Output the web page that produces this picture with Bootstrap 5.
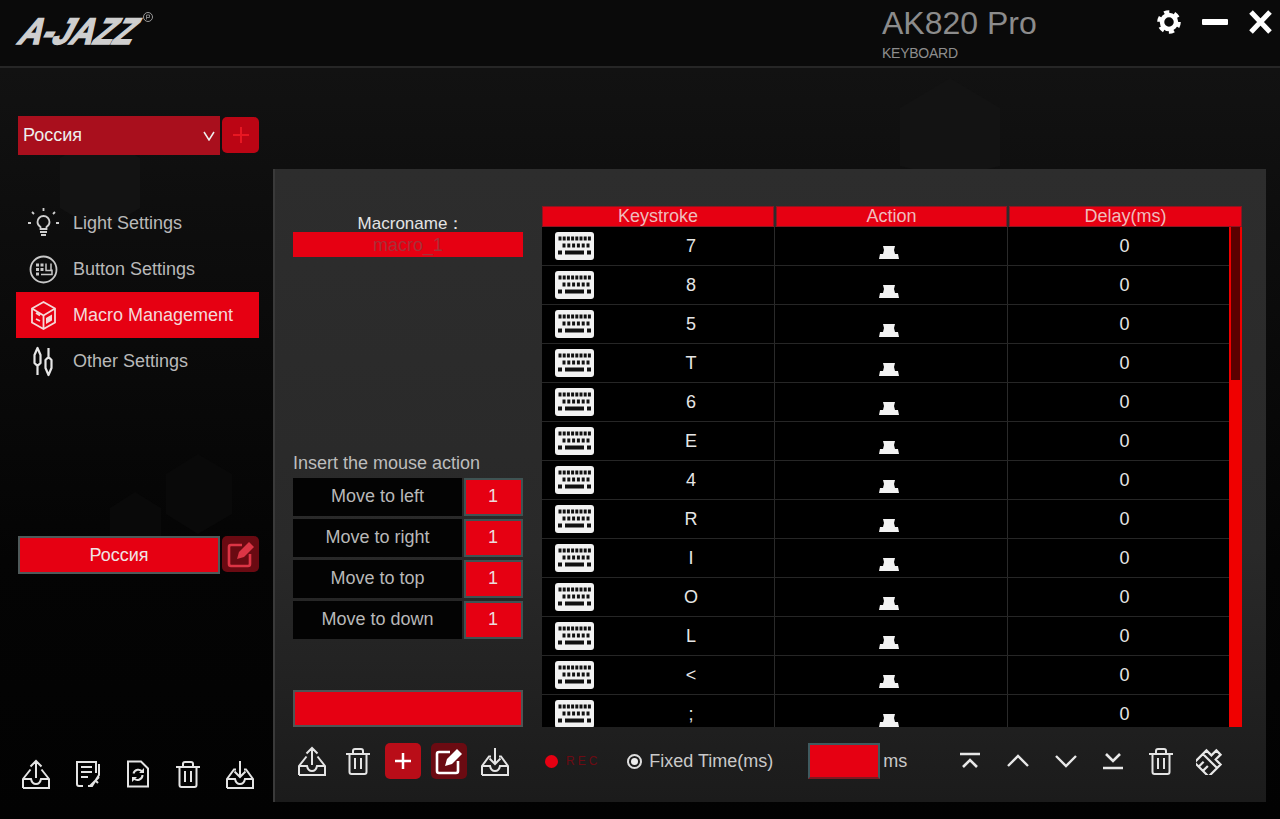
<!doctype html>
<html lang="en">
<head>
<meta charset="utf-8">
<title>AK820 Pro</title>
<link rel="stylesheet" href="https://cdn.jsdelivr.net/npm/bootstrap@5.3.0/dist/css/bootstrap.min.css">
<style>
html,body{height:100%;margin:0}
body{background:#050505;font-family:"Liberation Sans",Arial,sans-serif;color:#ddd;overflow:hidden}
.app-shell{width:1280px;height:819px;position:relative;background:linear-gradient(#121212 68px,#0e0e0e 200px,#040404 560px,#020202)}
.app-bg{position:absolute;left:0;top:68px;width:1280px;height:751px;pointer-events:none}
.app-head{height:68px;background:#0a0a0a;border-bottom:2px solid #262626;position:relative}
.logo-box{position:absolute;left:4px;top:2px}
.logo-text{font-family:"Liberation Sans",sans-serif;font-weight:700;font-size:37px;fill:#cfcfcf;stroke:#cfcfcf;stroke-width:1.600px}
.product{position:absolute;left:882px;top:4px;color:#8c8c8c;line-height:1}
.product-name{font-size:32px;margin-top:3px}
.product-sub{font-size:14px;margin-top:7px;color:#8e8e8e;letter-spacing:-.25px}
.win-icons{position:absolute;left:1156px;top:9px;gap:0}
.app-main{height:751px;position:relative}
.side-col{width:273px;padding:48px 14px 0 18px}
.sel-box{width:202px;height:39px;background:#a90f1d;color:#eee;font-size:18px;padding:0 5px}
.sq-btn{width:37px;height:36px;border-radius:5px;margin-left:2px;flex:none}
.sq-add{background:#bb0514;margin-bottom:2px}
.sq-edit{background:#6a0a12}
.side-nav{margin:45px 0 0 -2px;width:243px}
.side-item{height:46px;color:#b9b9b9;font-size:18px;padding-left:11px;gap:13px}
.side-item.is-on{background:#e60012;color:#f4d9d9}
.side-icon{width:33px;height:33px;flex:none}
.prof-btn{width:202px;height:38px;background:#e60012;border:2px solid #4f5a5a;color:#f0e4e4;font-size:18px}
.prof-row{margin-top:152px}
.side-tools{margin-top:185px;width:234px;margin-left:3px;justify-content:space-between}
.panel-box{width:993px;height:633px;margin-top:101px;background:linear-gradient(#2d2d2d,#292929 60%,#1b1b1b);border-left:2px solid #3a3a3a;padding:37px 0 0 18px;position:relative}
.left-col{width:230px;height:521px}
.macro-label{height:26px;line-height:35px;text-align:center;font-size:17px;color:#e4e4e4;padding-left:6px}
.macro-name{height:25px;background:#e60012;color:#a83038;text-align:center;font-size:18px;line-height:26px}
.insert-label{margin-top:194px;height:27px;line-height:25px;font-size:18px;color:#bdbdbd}
.move-row{height:38px;margin-bottom:3px;gap:2px}
.move-name{width:169px;background:#030303;color:#b8b8b8;font-size:18px;padding-bottom:1px}
.move-val{width:59px;height:38px;background:#e60012;border:2px solid #3f5353;color:#ecdcdc;font-size:18px;padding:0 1px 1px 0}
.big-red{margin-top:auto;height:37px;background:#e60012;border:2px solid #4f5555}
.tbl-wrap{width:701px;height:521px;margin-left:19px;position:relative;overflow:hidden}
.tbl-head{height:21px;gap:2px}
.tbl-head div{background:#e60012;border:1px solid #8d1520;color:#efbcbc;font-size:18px;text-align:center;line-height:19px}
.th-a{width:232px}.th-b{width:231px}.th-c{width:233px}
.tbl-body{height:500px;overflow:hidden;background:#000;width:687px}
.t-row{height:39px;border-bottom:1px solid #262626;color:#e6e6e6;font-size:18px}
.c-a{width:233px;padding-left:13px;border-right:1px solid #2a2a2a}
.c-a span{flex:1;text-align:center;padding-left:14px}
.c-b{width:233px;border-right:1px solid #2a2a2a;text-align:center;padding-right:5px}
.c-c{flex:1;text-align:center;padding-left:12px}
.kb-ic{width:39px;height:28px;flex:none}
.ms-ic{width:20px;height:13px;margin-top:19px}
.sb-track{position:absolute;left:687px;top:21px;width:13px;height:500px;background:#f00000}
.sb-thumb{width:9px;height:153px;margin-left:2px;background:#5b0000}
.tool-bar{height:68px;width:960px}
.tool-bar svg{flex:none}
.t-add{width:36px;height:36px;border-radius:5px;background:#b90d18}
.t-edit{width:36px;height:36px;border-radius:5px;background:#6b0b12}
.rec-dot{width:13px;height:13px;border-radius:50%;background:#e60012}
.rec-txt{font-size:12px;letter-spacing:3px;color:#6d0b13}
.radio-ring{width:15px;height:15px;border:2px solid #ddd;border-radius:50%;padding:2px;background-clip:content-box;background-color:#eee}
.fix-txt{font-size:18px;color:#c9c9c9}
.ms-input{width:72px;height:36px;background:#e60012;border:2px solid #3f5a5f;border-bottom-color:#7d1a22}
.ms-txt{font-size:18px;color:#c9c9c9}
</style>
</head>
<body>
<svg width="0" height="0" class="position-absolute">
<defs>
<symbol id="i-up" viewBox="0 0 30 30"><path d="M2 29H28V20L20.500 10.500M2 29V20L9.500 10.500M2 20H10Q11 25 15 25Q19 25 20 20H28M15 19V2M9.500 7.500 15 2 20.500 7.500" fill="none" stroke="#e4e4e4" stroke-width="2"/></symbol>
<symbol id="i-down" viewBox="0 0 30 30"><path d="M2 29H28V20L21 10.500H19M2 29V20L9 10.500H11M2 20H10Q11 25 15 25Q19 25 20 20H28M15 2V18M9.500 12.500 15 18 20.500 12.500" fill="none" stroke="#e4e4e4" stroke-width="2"/></symbol>
<symbol id="i-trash" viewBox="0 0 26 28"><path d="M1 7H25M8 7V4Q8 2 10 2H16Q18 2 18 4V7M4.500 7V25Q4.500 27 6.500 27H19.500Q21.500 27 21.500 25V7M10 11V22M16 11V22" fill="none" stroke="#e4e4e4" stroke-width="2"/></symbol>
<symbol id="i-note" viewBox="0 0 26 28"><path d="M7 26H3Q1 26 1 24V2H20V13M5 7H16M5 12H16M5 17H12M23 4V15L16 26H12M23 17 14 26M19 20l3 3" fill="none" stroke="#e4e4e4" stroke-width="2"/></symbol>
<symbol id="i-file" viewBox="0 0 24 28"><path d="M2 1.500H15L22 8.500V26.500H2ZM7.500 13.500A5 5 0 0 1 16.500 12M16.500 15A5 5 0 0 1 7.500 18" fill="none" stroke="#e4e4e4" stroke-width="2"/><path d="M13 13H18V8ZM11 17H6V22Z" fill="#e4e4e4"/></symbol>
<symbol id="i-edit" viewBox="0 0 30 30"><path d="M24 15V25Q24 27 22 27H5Q3 27 3 25V8Q3 6 5 6H16" fill="none" stroke="currentColor" stroke-width="2.600"/><path d="M11 20 13 13 23 3 28 8 18 18Z" fill="currentColor"/></symbol>
<symbol id="i-kb" viewBox="0 0 39 28"><rect width="39" height="28" rx="3" fill="#f2f2f2"/><path d="M3.500 4.500h3v4h-3zM7.700 4.500h3v4h-3zM11.900 4.500h3v4h-3zM16.100 4.500h3v4h-3zM20.300 4.500h3v4h-3zM24.500 4.500h3v4h-3zM28.700 4.500h3v4h-3zM32.900 4.500h3v4h-3zM7.500 11.500h3v4h-3zM12.300 11.500h3v4h-3zM17.100 11.500h3v4h-3zM21.900 11.500h3v4h-3zM26.700 11.500h3v4h-3zM31.500 11.500h3v4h-3zM3 18.500h4v4H3zM10 18.500h19v4H10zM32 18.500h4v4h-4z" fill="#111"/></symbol>
<symbol id="i-ms" viewBox="0 0 20 13"><path d="M4 0H16L15 4 16 8H19L20 13H0L1 8H4L5 4Z" fill="#f2f2f2"/></symbol>
</defs>
</svg>

<div class="app-shell">
  <svg class="app-bg" viewBox="0 0 1280 751" aria-hidden="true"><g fill="#090909"><path d="M166 406l32-20 34 20v40l-34 20-32-20z"/><path d="M110 440l25-16 26 16v34l-26 16-25-16z"/></g><g fill="#131313"><path d="M60 90l40-24 40 24v50l-40 24-40-24z"/><path d="M900 40l50-30 50 30v58l-50 12-50-12z"/></g></svg>

  <header class="app-head">
    <div class="logo-box">
      <svg width="170" height="60" viewBox="0 0 170 60"><g transform="translate(10 6)"><text class="logo-text" transform="skewX(-28)" x="21" y="36" textLength="114" lengthAdjust="spacingAndGlyphs">A-JAZZ</text></g><circle cx="144" cy="15" r="4.500" fill="none" stroke="#999"/><path d="M142.500 17.500V13H145.500V15.500H142.500" fill="none" stroke="#999" stroke-width=".8"/></svg>
    </div>
    <div class="product">
      <div class="product-name">AK820 Pro</div>
      <div class="product-sub">KEYBOARD</div>
    </div>
    <div class="win-icons d-flex align-items-center">
      <svg width="26" height="26" viewBox="0 0 26 26"><circle cx="13" cy="13" r="7" fill="none" stroke="#fff" stroke-width="4.500"/><circle cx="13" cy="13" r="10" fill="none" stroke="#fff" stroke-width="3.600" stroke-dasharray="5.240 5.230"/></svg>
      <svg width="26" height="26" viewBox="0 0 26 26" style="margin-left:20px"><rect y="10" width="26" height="6" rx="1" fill="#fff"/></svg>
      <svg width="23" height="26" viewBox="0 0 23 26" style="margin-left:21px"><path d="M2 3 21 23M21 3 2 23" stroke="#fff" stroke-width="5"/></svg>
    </div>
  </header>

  <div class="app-main d-flex">
    <aside class="side-col d-flex flex-column">
      <div class="d-flex align-items-center">
        <div class="sel-box d-flex align-items-center justify-content-between"><span>Россия</span><svg width="12" height="10" viewBox="0 0 12 10"><path d="M1 1 6 9 11 1" fill="none" stroke="#eee" stroke-width="1.500"/></svg></div>
        <div class="sq-btn sq-add d-flex align-items-center justify-content-center"><svg width="18" height="18" viewBox="0 0 18 18"><path d="M9 1V17M1 9H17" stroke="#e81722" stroke-width="2"/></svg></div>
      </div>
      <nav class="side-nav">
        <div class="side-item d-flex align-items-center"><svg class="side-icon" viewBox="0 0 33 33"><path d="M10.500 15a6 6 0 1 1 12 0q0 3-3 5v2h-6v-2q-3-2-3-5zM13 25h7M14 28h5M16.500 1v3M5 5l2 2M28 5l-2 2M1 16h3M29 16h3" fill="none" stroke="#cfcfcf" stroke-width="1.800"/></svg>Light Settings</div>
        <div class="side-item d-flex align-items-center"><svg class="side-icon" viewBox="0 0 33 33"><circle cx="16.500" cy="16.500" r="13" fill="none" stroke="#c8c8c8" stroke-width="1.800"/><path d="M9 10.500h3v3H9zM13.500 10.500h3v3h-3zM9 15h3v3H9zM13.500 15h3v3h-3zM9 19.500h3v3H9z" fill="#c8c8c8"/><path d="M19 10.500v7h5v-7M14 21.500h11v-5" fill="none" stroke="#c8c8c8" stroke-width="1.500"/></svg>Button Settings</div>
        <div class="side-item is-on d-flex align-items-center"><svg class="side-icon" viewBox="0 0 33 33"><path d="M16.500 3 28 9.500v14L16.500 30 5 23.500v-14zM5 9.500l11.500 7 11.500-7M16.500 16.500V30M9 14l4 2.500M9 20l4 2" fill="none" stroke="#f4d9d9" stroke-width="1.800"/><path d="M19 19l6-3.500v6L19 25z" fill="#f4d9d9"/></svg>Macro Management</div>
        <div class="side-item d-flex align-items-center"><svg class="side-icon" viewBox="0 0 33 33"><path d="M10.500 3 7.500 10V18L10.500 21 13.500 18V10ZM10.500 21V30M21.500 3V12M21.500 12 18.500 15V23L21.500 30 24.500 23V15Z" fill="none" stroke="#e6e6e6" stroke-width="2.200" stroke-linejoin="round"/></svg>Other Settings</div>
      </nav>
      <div class="prof-row d-flex align-items-start">
        <div class="prof-btn d-flex align-items-center justify-content-center">Россия</div>
        <div class="sq-btn sq-edit d-flex align-items-center justify-content-center text-danger"><svg width="30" height="30"><use href="#i-edit"/></svg></div>
      </div>
      <div class="side-tools d-flex align-items-center">
        <svg width="30" height="30"><use href="#i-up"/></svg>
        <svg width="26" height="28"><use href="#i-note"/></svg>
        <svg width="24" height="28"><use href="#i-file"/></svg>
        <svg width="26" height="28"><use href="#i-trash"/></svg>
        <svg width="30" height="30"><use href="#i-down"/></svg>
      </div>
    </aside>

    <section class="panel-box">
      <div class="d-flex">
        <div class="left-col d-flex flex-column">
          <div class="macro-label">Macroname：</div>
          <div class="macro-name">macro_1</div>
          <div class="insert-label">Insert the mouse action</div>
          <div class="move-row d-flex"><div class="move-name d-flex align-items-center justify-content-center">Move to left</div><div class="move-val d-flex align-items-center justify-content-center">1</div></div>
          <div class="move-row d-flex"><div class="move-name d-flex align-items-center justify-content-center">Move to right</div><div class="move-val d-flex align-items-center justify-content-center">1</div></div>
          <div class="move-row d-flex"><div class="move-name d-flex align-items-center justify-content-center">Move to top</div><div class="move-val d-flex align-items-center justify-content-center">1</div></div>
          <div class="move-row d-flex"><div class="move-name d-flex align-items-center justify-content-center">Move to down</div><div class="move-val d-flex align-items-center justify-content-center">1</div></div>
          <div class="big-red"></div>
        </div>
        <div class="tbl-wrap">
          <div class="tbl-head d-flex"><div class="th-a">Keystroke</div><div class="th-b">Action</div><div class="th-c">Delay(ms)</div></div>
          <div class="tbl-body">
            <div class="t-row d-flex align-items-center"><div class="c-a d-flex align-items-center h-100"><svg class="kb-ic"><use href="#i-kb"/></svg><span>7</span></div><div class="c-b h-100"><svg class="ms-ic"><use href="#i-ms"/></svg></div><div class="c-c">0</div></div>
            <div class="t-row d-flex align-items-center"><div class="c-a d-flex align-items-center h-100"><svg class="kb-ic"><use href="#i-kb"/></svg><span>8</span></div><div class="c-b h-100"><svg class="ms-ic"><use href="#i-ms"/></svg></div><div class="c-c">0</div></div>
            <div class="t-row d-flex align-items-center"><div class="c-a d-flex align-items-center h-100"><svg class="kb-ic"><use href="#i-kb"/></svg><span>5</span></div><div class="c-b h-100"><svg class="ms-ic"><use href="#i-ms"/></svg></div><div class="c-c">0</div></div>
            <div class="t-row d-flex align-items-center"><div class="c-a d-flex align-items-center h-100"><svg class="kb-ic"><use href="#i-kb"/></svg><span>T</span></div><div class="c-b h-100"><svg class="ms-ic"><use href="#i-ms"/></svg></div><div class="c-c">0</div></div>
            <div class="t-row d-flex align-items-center"><div class="c-a d-flex align-items-center h-100"><svg class="kb-ic"><use href="#i-kb"/></svg><span>6</span></div><div class="c-b h-100"><svg class="ms-ic"><use href="#i-ms"/></svg></div><div class="c-c">0</div></div>
            <div class="t-row d-flex align-items-center"><div class="c-a d-flex align-items-center h-100"><svg class="kb-ic"><use href="#i-kb"/></svg><span>E</span></div><div class="c-b h-100"><svg class="ms-ic"><use href="#i-ms"/></svg></div><div class="c-c">0</div></div>
            <div class="t-row d-flex align-items-center"><div class="c-a d-flex align-items-center h-100"><svg class="kb-ic"><use href="#i-kb"/></svg><span>4</span></div><div class="c-b h-100"><svg class="ms-ic"><use href="#i-ms"/></svg></div><div class="c-c">0</div></div>
            <div class="t-row d-flex align-items-center"><div class="c-a d-flex align-items-center h-100"><svg class="kb-ic"><use href="#i-kb"/></svg><span>R</span></div><div class="c-b h-100"><svg class="ms-ic"><use href="#i-ms"/></svg></div><div class="c-c">0</div></div>
            <div class="t-row d-flex align-items-center"><div class="c-a d-flex align-items-center h-100"><svg class="kb-ic"><use href="#i-kb"/></svg><span>I</span></div><div class="c-b h-100"><svg class="ms-ic"><use href="#i-ms"/></svg></div><div class="c-c">0</div></div>
            <div class="t-row d-flex align-items-center"><div class="c-a d-flex align-items-center h-100"><svg class="kb-ic"><use href="#i-kb"/></svg><span>O</span></div><div class="c-b h-100"><svg class="ms-ic"><use href="#i-ms"/></svg></div><div class="c-c">0</div></div>
            <div class="t-row d-flex align-items-center"><div class="c-a d-flex align-items-center h-100"><svg class="kb-ic"><use href="#i-kb"/></svg><span>L</span></div><div class="c-b h-100"><svg class="ms-ic"><use href="#i-ms"/></svg></div><div class="c-c">0</div></div>
            <div class="t-row d-flex align-items-center"><div class="c-a d-flex align-items-center h-100"><svg class="kb-ic"><use href="#i-kb"/></svg><span>&lt;</span></div><div class="c-b h-100"><svg class="ms-ic"><use href="#i-ms"/></svg></div><div class="c-c">0</div></div>
            <div class="t-row d-flex align-items-center"><div class="c-a d-flex align-items-center h-100"><svg class="kb-ic"><use href="#i-kb"/></svg><span>;</span></div><div class="c-b h-100"><svg class="ms-ic"><use href="#i-ms"/></svg></div><div class="c-c">0</div></div>
          </div>
          <div class="sb-track"><div class="sb-thumb"></div></div>
        </div>
      </div>
      <div class="tool-bar d-flex align-items-center">
        <svg width="30" height="30" style="margin-left:4px"><use href="#i-up"/></svg>
        <svg width="26" height="28" style="margin-left:18px"><use href="#i-trash"/></svg>
        <div class="t-add d-flex align-items-center justify-content-center" style="margin-left:14px"><svg width="20" height="20" viewBox="0 0 20 20"><path d="M10 2V18M2 10H18" stroke="#fff" stroke-width="2.500"/></svg></div>
        <div class="t-edit d-flex align-items-center justify-content-center text-white" style="margin-left:10px"><svg width="30" height="30"><use href="#i-edit"/></svg></div>
        <svg width="30" height="30" style="margin-left:13px"><use href="#i-down"/></svg>
        <div class="rec-dot" style="margin-left:35px"></div>
        <div class="rec-txt" style="margin-left:8px">REC</div>
        <div class="radio-ring" style="margin-left:27px"></div>
        <div class="fix-txt" style="margin-left:7px">Fixed Time(ms)</div>
        <div class="ms-input" style="margin-left:35px"></div>
        <div class="ms-txt" style="margin-left:3px">ms</div>
        <svg width="20" height="18" viewBox="0 0 20 18" style="margin-left:53px"><path d="M0 2H20M3 15 10 8 17 15" fill="none" stroke="#e8e8e8" stroke-width="2.600"/></svg>
        <svg width="24" height="14" viewBox="0 0 24 14" style="margin-left:26px"><path d="M2 12 12 2 22 12" fill="none" stroke="#e8e8e8" stroke-width="2.400"/></svg>
        <svg width="24" height="14" viewBox="0 0 24 14" style="margin-left:24px"><path d="M2 2 12 12 22 2" fill="none" stroke="#e8e8e8" stroke-width="2.400"/></svg>
        <svg width="20" height="18" viewBox="0 0 20 18" style="margin-left:25px"><path d="M3 2 10 9 17 2M0 16H20" fill="none" stroke="#e8e8e8" stroke-width="2.600"/></svg>
        <svg width="26" height="28" style="margin-left:25px"><use href="#i-trash"/></svg>
        <svg width="28" height="28" viewBox="0 0 28 28" style="margin-left:22px"><path d="M11 2H17V9H24V26H4V9H11ZM4 14H24M10 19V26M16 19V26" transform="rotate(45 14 14)" fill="none" stroke="#e8e8e8" stroke-width="2.200"/></svg>
      </div>
    </section>
  </div>
</div>
<script src="https://cdn.jsdelivr.net/npm/bootstrap@5.3.0/dist/js/bootstrap.bundle.min.js"></script>
</body>
</html>
